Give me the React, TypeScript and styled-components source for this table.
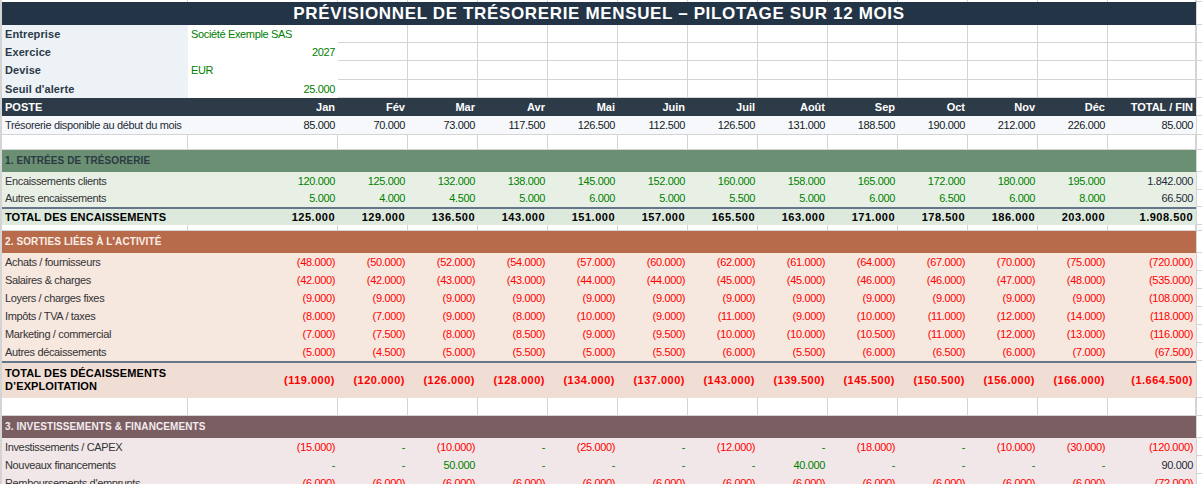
import React from "react";
import styled, { createGlobalStyle } from "styled-components";

const GRID = "#d4d4d4";
const GREEN = "#008000";
const RED = "#ff0000";
const NAVY = "#1e2b3a";

const Global = createGlobalStyle`
  html, body { margin: 0; padding: 0; background: #ffffff; }
  body {
    font-family: "Liberation Sans", Arial, sans-serif;
    font-size: 11px;
    color: #333333;
    overflow: hidden;
  }
`;

const Sheet = styled.div`
  border-left: 2px solid ${GRID};
  width: 1200px;
`;

const Row = styled.div<{ $h: number }>`
  display: grid;
  grid-template-columns: 1194px 1fr;
  height: ${(p) => p.$h}px;
`;

const Band = styled.div<{ $bg?: string; $rule?: boolean; $line?: boolean }>`
  display: grid;
  grid-template-columns: 186px 150px repeat(11, 70px) 88px;
  background: ${(p) => p.$bg || "transparent"};
  border-top: ${(p) => (p.$rule ? "2px solid #65758a" : "none")};
  box-shadow: ${(p) => (p.$line ? `inset 0 -1px 0 ${GRID}` : "none")};
  box-sizing: border-box;
  min-height: 0;
`;

const Edge = styled.div`
  box-shadow: inset 1px -1px 0 ${GRID};
`;

const Blank = styled.div<{ $noBottom?: boolean }>`
  box-shadow: ${(p) =>
    p.$noBottom ? `inset -1px 0 0 ${GRID}` : `inset -1px -1px 0 ${GRID}`};
`;

const TitleBar = styled.div`
  grid-column: 1 / -1;
  background: #243447;
  color: #ffffff;
  font-weight: 700;
  font-size: 17px;
  letter-spacing: 0.65px;
  display: flex;
  align-items: center;
  justify-content: center;
  white-space: nowrap;
`;

const Label = styled.div<{ $bold?: boolean; $color?: string; $bg?: string; $span?: boolean; $size?: number }>`
  grid-column: ${(p) => (p.$span ? "1 / -1" : "auto")};
  display: flex;
  align-items: center;
  padding-left: 3px;
  padding-bottom: 1px;
  box-sizing: border-box;
  background: ${(p) => p.$bg || "transparent"};
  color: ${(p) => p.$color || "#333333"};
  font-weight: ${(p) => (p.$bold ? 700 : 400)};
  font-size: ${(p) => p.$size || 11}px;
  letter-spacing: ${(p) => (p.$bold ? "0.1px" : "-0.35px")};
  white-space: nowrap;
`;

const WrapLabel = styled.div`
  display: flex;
  align-items: center;
  padding: 0 0 2px 3px;
  font-weight: 700;
  font-size: 11px;
  line-height: 12.5px;
  color: #000000;
  letter-spacing: 0.1px;
`;

const Value = styled.div<{ $right?: boolean }>`
  display: flex;
  align-items: center;
  justify-content: ${(p) => (p.$right ? "flex-end" : "flex-start")};
  padding: 0 3px 1px 3px;
  background: #ffffff;
  color: ${GREEN};
  letter-spacing: -0.35px;
  white-space: nowrap;
`;

const Num = styled.div<{ $color?: string; $bold?: boolean }>`
  display: flex;
  align-items: center;
  justify-content: flex-end;
  padding: 0 3px 1px 0;
  color: ${(p) => p.$color || NAVY};
  font-weight: ${(p) => (p.$bold ? 700 : 400)};
  letter-spacing: ${(p) => (p.$bold ? "0.5px" : "-0.35px")};
  white-space: nowrap;
`;

const HeadCell = styled.div<{ $left?: boolean }>`
  display: flex;
  align-items: center;
  justify-content: ${(p) => (p.$left ? "flex-start" : "flex-end")};
  padding: ${(p) => (p.$left ? "0 0 1px 3px" : "0 3px 1px 0")};
  color: #ffffff;
  font-weight: 700;
  font-size: 11px;
  white-space: nowrap;
`;

const months = ["Jan", "Fév", "Mar", "Avr", "Mai", "Juin", "Juil", "Août", "Sep", "Oct", "Nov", "Déc"];

const blanks = (n: number, noBottom?: boolean) =>
  Array.from({ length: n }, (_, i) => <Blank key={"b" + i} $noBottom={noBottom} />);

type DataRow = {
  label: string;
  values: string[];
  pos: string;
  totalPos: string;
};

const colorFor = (v: string, pos: string) => {
  if (v.startsWith("(")) return RED;
  if (v === "-") return GREEN;
  return pos;
};

const info = [
  { label: "Entreprise", value: "Société Exemple SAS", right: false },
  { label: "Exercice", value: "2027", right: true },
  { label: "Devise", value: "EUR", right: false },
  { label: "Seuil d'alerte", value: "25.000", right: true },
];

const section1: DataRow[] = [
  {
    label: "Encaissements clients",
    values: ["120.000", "125.000", "132.000", "138.000", "145.000", "152.000", "160.000", "158.000", "165.000", "172.000", "180.000", "195.000", "1.842.000"],
    pos: GREEN,
    totalPos: NAVY,
  },
  {
    label: "Autres encaissements",
    values: ["5.000", "4.000", "4.500", "5.000", "6.000", "5.000", "5.500", "5.000", "6.000", "6.500", "6.000", "8.000", "66.500"],
    pos: GREEN,
    totalPos: NAVY,
  },
];

const section2: DataRow[] = [
  { label: "Achats / fournisseurs", values: ["(48.000)", "(50.000)", "(52.000)", "(54.000)", "(57.000)", "(60.000)", "(62.000)", "(61.000)", "(64.000)", "(67.000)", "(70.000)", "(75.000)", "(720.000)"], pos: RED, totalPos: RED },
  { label: "Salaires & charges", values: ["(42.000)", "(42.000)", "(43.000)", "(43.000)", "(44.000)", "(44.000)", "(45.000)", "(45.000)", "(46.000)", "(46.000)", "(47.000)", "(48.000)", "(535.000)"], pos: RED, totalPos: RED },
  { label: "Loyers / charges fixes", values: ["(9.000)", "(9.000)", "(9.000)", "(9.000)", "(9.000)", "(9.000)", "(9.000)", "(9.000)", "(9.000)", "(9.000)", "(9.000)", "(9.000)", "(108.000)"], pos: RED, totalPos: RED },
  { label: "Impôts / TVA / taxes", values: ["(8.000)", "(7.000)", "(9.000)", "(8.000)", "(10.000)", "(9.000)", "(11.000)", "(9.000)", "(10.000)", "(11.000)", "(12.000)", "(14.000)", "(118.000)"], pos: RED, totalPos: RED },
  { label: "Marketing / commercial", values: ["(7.000)", "(7.500)", "(8.000)", "(8.500)", "(9.000)", "(9.500)", "(10.000)", "(10.000)", "(10.500)", "(11.000)", "(12.000)", "(13.000)", "(116.000)"], pos: RED, totalPos: RED },
  { label: "Autres décaissements", values: ["(5.000)", "(4.500)", "(5.000)", "(5.500)", "(5.000)", "(5.500)", "(6.000)", "(5.500)", "(6.000)", "(6.500)", "(6.000)", "(7.000)", "(67.500)"], pos: RED, totalPos: RED },
];

const section3: DataRow[] = [
  { label: "Investissements / CAPEX", values: ["(15.000)", "-", "(10.000)", "-", "(25.000)", "-", "(12.000)", "-", "(18.000)", "-", "(10.000)", "(30.000)", "(120.000)"], pos: GREEN, totalPos: NAVY },
  { label: "Nouveaux financements", values: ["-", "-", "50.000", "-", "-", "-", "-", "40.000", "-", "-", "-", "-", "90.000"], pos: GREEN, totalPos: NAVY },
  { label: "Remboursements d'emprunts", values: ["(6.000)", "(6.000)", "(6.000)", "(6.000)", "(6.000)", "(6.000)", "(6.000)", "(6.000)", "(6.000)", "(6.000)", "(6.000)", "(6.000)", "(72.000)"], pos: RED, totalPos: RED },
];

const treso = ["85.000", "70.000", "73.000", "117.500", "126.500", "112.500", "126.500", "131.000", "188.500", "190.000", "212.000", "226.000", "85.000"];
const totEnc = ["125.000", "129.000", "136.500", "143.000", "151.000", "157.000", "165.500", "163.000", "171.000", "178.500", "186.000", "203.000", "1.908.500"];
const totDec = ["(119.000)", "(120.000)", "(126.000)", "(128.000)", "(134.000)", "(137.000)", "(143.000)", "(139.500)", "(145.500)", "(150.500)", "(156.000)", "(166.000)", "(1.664.500)"];

const DataLines = ({ rows, bg }: { rows: DataRow[]; bg: string }) => (
  <>
    {rows.map((r) => (
      <Row $h={18} key={r.label}>
        <Band $bg={bg}>
          <Label>{r.label}</Label>
          {r.values.map((v, i) => (
            <Num key={i} $color={colorFor(v, i === 12 ? r.totalPos : r.pos)}>
              {v}
            </Num>
          ))}
        </Band>
        <Edge />
      </Row>
    ))}
  </>
);

const SpacerRow = ({ h }: { h: number }) => (
  <Row $h={h}>
    <Band>{blanks(14)}</Band>
    <Edge />
  </Row>
);

const SectionHead = ({ text, bg, color, h }: { text: string; bg: string; color: string; h: number }) => (
  <Row $h={h}>
    <Band $bg={bg}>
      <Label $span $bold $size={10} $color={color}>
        {text}
      </Label>
    </Band>
    <Edge />
  </Row>
);

export default function App() {
  return (
    <>
      <Global />
      <Sheet>
        <Row $h={2}>
          <Band>{blanks(14, true)}</Band>
          <Edge />
        </Row>
        <Row $h={23}>
          <Band>
            <TitleBar>PRÉVISIONNEL DE TRÉSORERIE MENSUEL – PILOTAGE SUR 12 MOIS</TitleBar>
          </Band>
          <Edge />
        </Row>
        {info.map((it, idx) => (
          <Row $h={idx === 2 ? 19 : 18} key={it.label}>
            <Band>
              <Label $bold $bg="#edf2f6" $color="#2b3a48">
                {it.label}
              </Label>
              <Value $right={it.right}>{it.value}</Value>
              {blanks(12)}
            </Band>
            <Edge />
          </Row>
        ))}
        <Row $h={18}>
          <Band $bg="#2d3b48">
            <HeadCell $left>POSTE</HeadCell>
            {months.map((m) => (
              <HeadCell key={m}>{m}</HeadCell>
            ))}
            <HeadCell>TOTAL / FIN</HeadCell>
          </Band>
          <Edge />
        </Row>
        <Row $h={19}>
          <Band $bg="#f6f8fb" $line>
            <Label $color="#1e2b3a">Trésorerie disponible au début du mois</Label>
            {treso.map((v, i) => (
              <Num key={i} $color="#111a24">
                {v}
              </Num>
            ))}
          </Band>
          <Edge />
        </Row>
        <SpacerRow h={15} />
        <SectionHead h={22} text="1. ENTRÉES DE TRÉSORERIE" bg="#6a8f72" color="#2c3a44" />
        <Row $h={18}>
          <Band $bg="#e8f0e6">
            <Label>{section1[0].label}</Label>
            {section1[0].values.map((v, i) => (
              <Num key={i} $color={colorFor(v, i === 12 ? NAVY : GREEN)}>
                {v}
              </Num>
            ))}
          </Band>
          <Edge />
        </Row>
        <Row $h={17}>
          <Band $bg="#e8f0e6">
            <Label>{section1[1].label}</Label>
            {section1[1].values.map((v, i) => (
              <Num key={i} $color={colorFor(v, i === 12 ? NAVY : GREEN)}>
                {v}
              </Num>
            ))}
          </Band>
          <Edge />
        </Row>
        <Row $h={18}>
          <Band $bg="#dce9dc" $rule>
            <Label $bold $color="#000000">
              TOTAL DES ENCAISSEMENTS
            </Label>
            {totEnc.map((v, i) => (
              <Num key={i} $bold $color="#000000">
                {v}
              </Num>
            ))}
          </Band>
          <Edge />
        </Row>
        <SpacerRow h={6} />
        <SectionHead h={22} text="2. SORTIES LIÉES À L'ACTIVITÉ" bg="#b76b4b" color="#fbeee6" />
        <DataLines rows={section2} bg="#f6e7df" />
        <Row $h={37}>
          <Band $bg="#f0ddd3" $rule>
            <WrapLabel>TOTAL DES DÉCAISSEMENTS D’EXPLOITATION</WrapLabel>
            {totDec.map((v, i) => (
              <Num key={i} $bold $color={RED}>
                {v}
              </Num>
            ))}
          </Band>
          <Edge />
        </Row>
        <SpacerRow h={18} />
        <SectionHead h={22} text="3. INVESTISSEMENTS & FINANCEMENTS" bg="#7b5e62" color="#f2ecee" />
        <DataLines rows={section3} bg="#f1e7e8" />
      </Sheet>
    </>
  );
}
